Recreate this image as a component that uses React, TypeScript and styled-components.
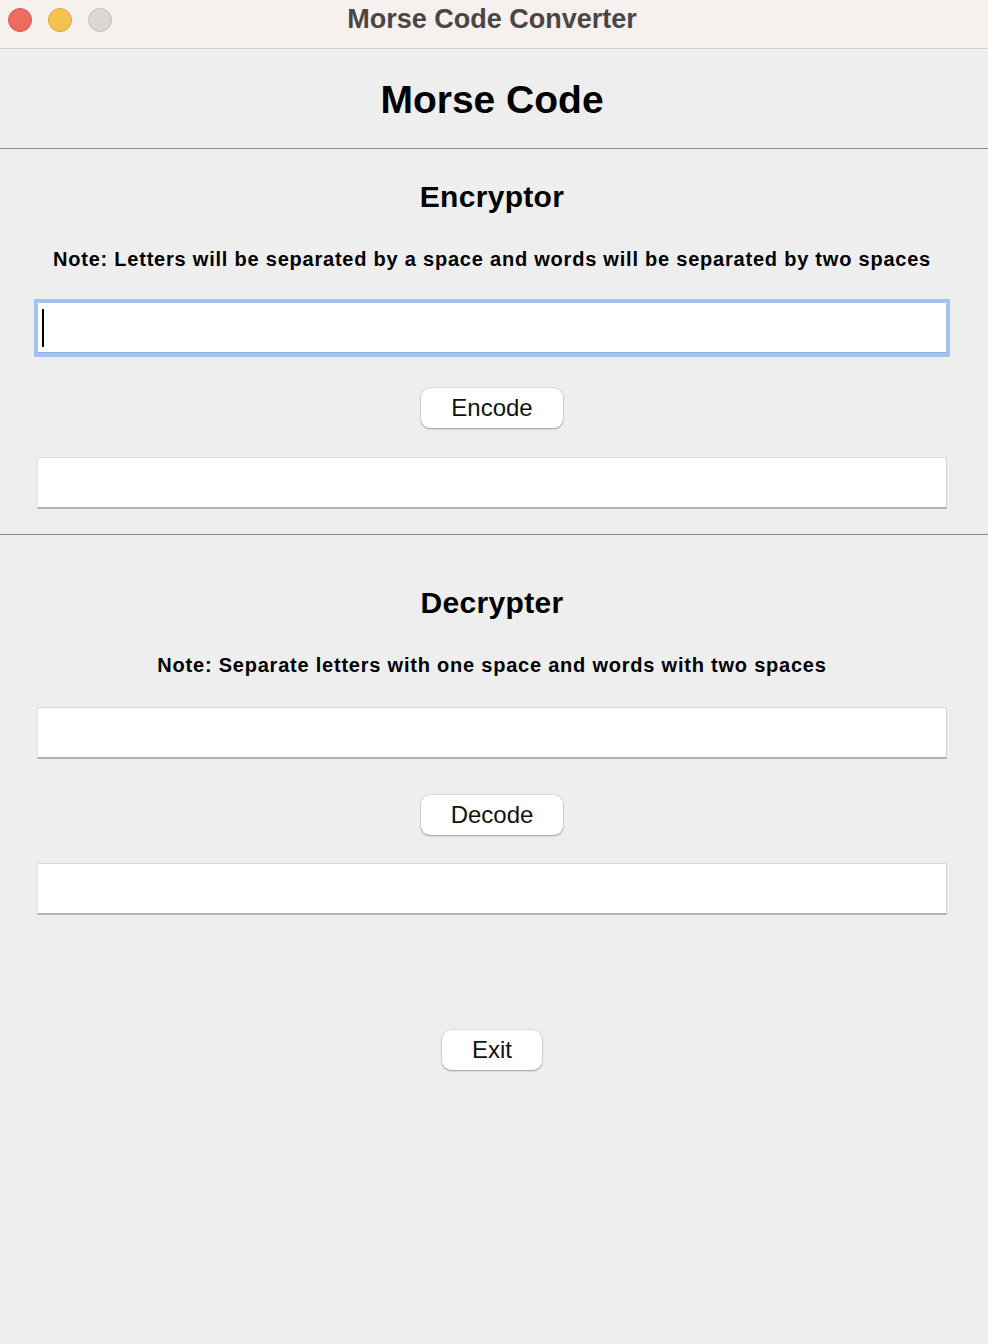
import React from "react";
import styled, { createGlobalStyle } from "styled-components";

const GlobalStyle = createGlobalStyle`
  html, body {
    margin: 0;
    padding: 0;
    background: #eeeeee;
  }
  body {
    font-family: "Liberation Sans", Arial, sans-serif;
    color: #000;
  }
`;

const Window = styled.div`
  width: 988px;
  height: 1344px;
  background: #eeeeee;
  display: flex;
  flex-direction: column;
  overflow: hidden;
`;

const TitleBar = styled.div`
  height: 48px;
  flex: 0 0 48px;
  background: #f6f1ef;
  border-bottom: 1px solid #d3cfcd;
  display: flex;
  align-items: flex-start;
  position: relative;
`;

const Lights = styled.div`
  position: absolute;
  left: 8px;
  top: 8px;
  display: flex;
  gap: 16px;
`;

const Light = styled.span<{ $fill: string; $edge: string }>`
  width: 24px;
  height: 24px;
  border-radius: 50%;
  box-sizing: border-box;
  background: ${(p) => p.$fill};
  border: 1px solid ${(p) => p.$edge};
`;

const WindowTitle = styled.div`
  flex: 1;
  text-align: center;
  font-size: 27px;
  font-weight: 700;
  color: #4b4646;
  line-height: 38px;
  padding-right: 4px;
`;

const Header = styled.div`
  height: 99px;
  flex: 0 0 99px;
  border-bottom: 1px solid #8c8c8c;
  display: flex;
  align-items: center;
  justify-content: center;
  padding-right: 4px;
`;

const AppTitle = styled.h1`
  margin: 0;
  font-size: 39px;
  font-weight: 700;
  line-height: 46px;
  padding-top: 2px;
`;

const Section = styled.section<{ $top: number; $bottom: number; $divider?: boolean }>`
  display: flex;
  flex-direction: column;
  align-items: stretch;
  padding: ${(p) => p.$top}px 41px ${(p) => p.$bottom}px 37px;
  border-bottom: ${(p) => (p.$divider ? "1px solid #8c8c8c" : "none")};
`;

const Heading = styled.h2`
  margin: 0;
  text-align: center;
  font-size: 30px;
  font-weight: 700;
  line-height: 36px;
  letter-spacing: 0.3px;
`;

const Note = styled.p`
  margin: 32px 0 0;
  text-align: center;
  font-size: 20px;
  font-weight: 700;
  line-height: 24px;
  letter-spacing: 0.78px;
  white-space: nowrap;
`;

const Field = styled.div<{ $gap: number }>`
  margin-top: ${(p) => p.$gap}px;
  height: 52px;
  box-sizing: border-box;
  background: #ffffff;
  border-top: 1px solid #dadada;
  border-right: 1px solid #d4d4d4;
  border-left: 1px solid #e4e4e4;
  border-bottom: 2px solid #b3b3b3;
`;

const FocusedField = styled.div<{ $gap: number }>`
  margin: ${(p) => p.$gap}px 1px 0 1px;
  height: 50px;
  background: #ffffff;
  box-shadow: 0 0 0 4px #a4c3ee, inset 0 -1px 0 #8fb0e0;
  display: flex;
  align-items: center;
  padding-left: 4px;
`;

const Caret = styled.span`
  width: 2px;
  height: 38px;
  background: #000;
`;

const ButtonRow = styled.div<{ $gap: number }>`
  margin-top: ${(p) => p.$gap}px;
  display: flex;
  justify-content: center;
`;

const Button = styled.button`
  height: 40px;
  padding: 0 30px;
  border: none;
  border-radius: 9px;
  background: #ffffff;
  box-shadow: 0 0 0 0.5px rgba(0, 0, 0, 0.12), 0 1px 2px rgba(0, 0, 0, 0.3);
  font-family: "Liberation Sans", Arial, sans-serif;
  font-size: 24px;
  color: #111;
  line-height: 40px;
  cursor: default;
`;

export default function App() {
  return (
    <>
      <GlobalStyle />
      <Window>
        <TitleBar>
          <Lights>
            <Light $fill="#ee6b60" $edge="#d85a50" />
            <Light $fill="#f5c250" $edge="#dca63b" />
            <Light $fill="#dbd7d4" $edge="#c4c0bd" />
          </Lights>
          <WindowTitle>Morse Code Converter</WindowTitle>
        </TitleBar>
        <Header>
          <AppTitle>Morse Code</AppTitle>
        </Header>
        <Section $top={30} $bottom={25} $divider>
          <Heading>Encryptor</Heading>
          <Note>Note: Letters will be separated by a space and words will be separated by two spaces</Note>
          <FocusedField $gap={32}>
            <Caret />
          </FocusedField>
          <ButtonRow $gap={35}>
            <Button>Encode</Button>
          </ButtonRow>
          <Field $gap={29} />
        </Section>
        <Section $top={50} $bottom={0}>
          <Heading>Decrypter</Heading>
          <Note>Note: Separate letters with one space and words with two spaces</Note>
          <Field $gap={30} />
          <ButtonRow $gap={36}>
            <Button>Decode</Button>
          </ButtonRow>
          <Field $gap={28} />
          <ButtonRow $gap={115}>
            <Button>Exit</Button>
          </ButtonRow>
        </Section>
      </Window>
    </>
  );
}
